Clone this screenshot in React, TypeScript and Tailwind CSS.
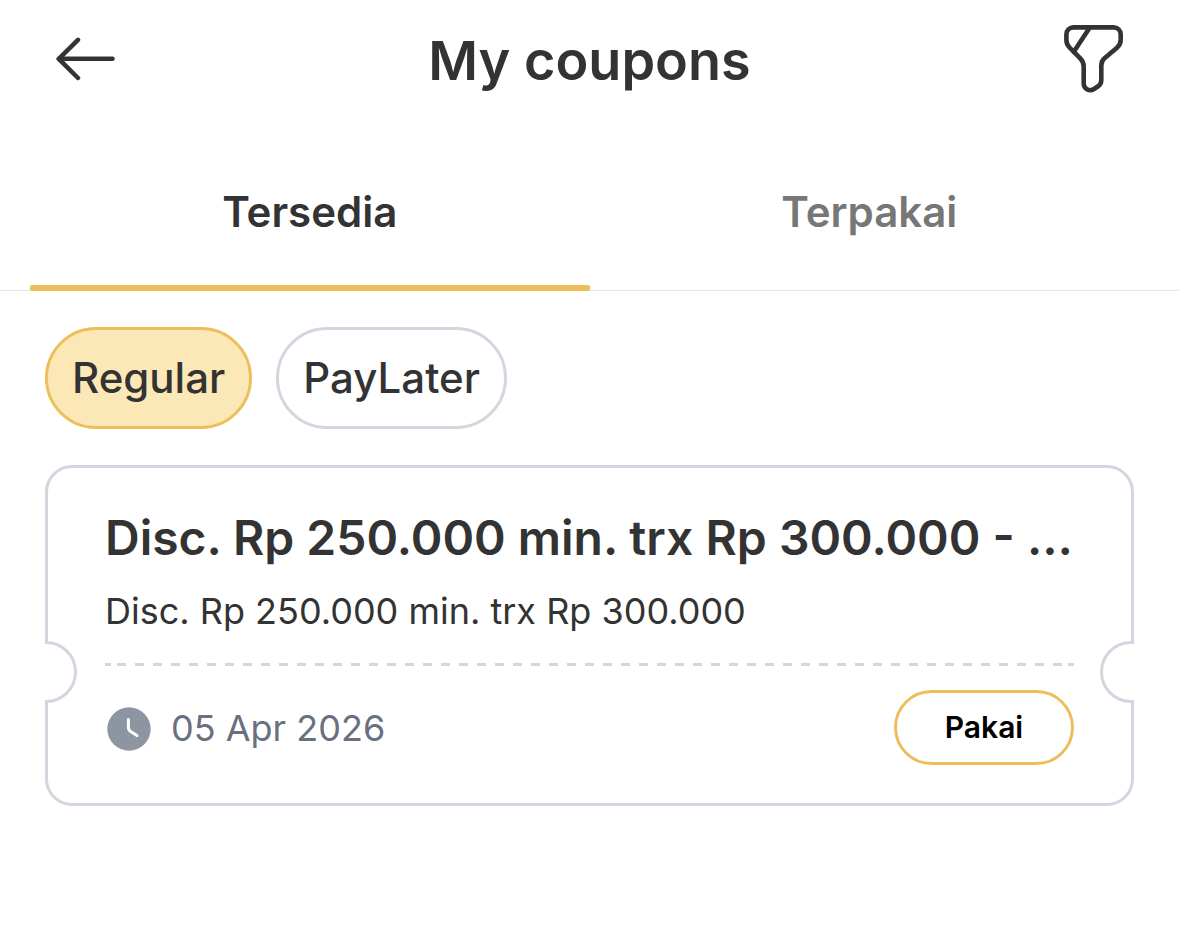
import { useState } from "react";
import clsx from "clsx";

interface Coupon {
  id: number;
  title: string;
  description: string;
  expiresAt: string;
}

const TABS = ["Tersedia", "Terpakai"];
const CATEGORIES = ["Regular", "PayLater"];

const COUPONS: Coupon[] = [
  {
    id: 1,
    title: "Disc. Rp 250.000 min. trx Rp 300.000 - …",
    description: "Disc. Rp 250.000 min. trx Rp 300.000",
    expiresAt: "05 Apr 2026",
  },
];

function BackIcon() {
  return (
    <svg width="60" height="44" viewBox="0 0 60 44" fill="none" stroke="currentColor" strokeWidth="4.5" strokeLinecap="round" strokeLinejoin="round">
      <path d="M22 2.8 2.8 21.8 22 41" />
      <path d="M2.8 21.8H56.5" />
    </svg>
  );
}

function FilterIcon() {
  return (
    <svg width="60" height="68" viewBox="0 0 60 68" fill="none" stroke="currentColor" strokeWidth="4.6" strokeLinecap="round" strokeLinejoin="round">
      <path d="M10.5 2.4H50.5C54.6 2.4 57.7 5.4 57.7 9.5V14.8C57.7 18 56.3 20.8 54 22.8L41.5 33.2C39.3 35.1 38.3 37.5 38.3 40.5V55C38.3 57.8 37 60 34.8 61.5L31 64C26.5 67 20.7 63.8 20.7 58.5V41.5C20.7 38.5 19.5 35.8 17.5 33.7L6.5 22.5C4.5 20.4 3.4 17.8 3.4 15V9.5C3.4 5.4 6.4 2.4 10.5 2.4Z" />
      <path d="M26.3 3.2 10.8 26.8" />
    </svg>
  );
}

function ClockIcon() {
  return (
    <svg width="44" height="46" viewBox="0 -2 44 46" fill="none" className="shrink-0">
      <circle cx="22" cy="22" r="21.7" fill="#8d95a3" />
      <path d="M21.4 12.6V20.6C21.4 22.2 22.2 23.7 23.6 24.5L30 28.6" stroke="#fff" strokeWidth="3" strokeLinecap="round" strokeLinejoin="round" />
    </svg>
  );
}

function CouponCard({ coupon }: { coupon: Coupon }) {
  return (
    <article className="relative overflow-hidden">
      <div className="rounded-[27px] border-3 border-[#d4d6df] px-[57px] pt-10 pb-[38px]">
        <h2 className="truncate text-[48px] leading-[60px] font-semibold">{coupon.title}</h2>
        <p className="mt-[19px] text-[36px] leading-[48px]">{coupon.description}</p>

        <div className="mt-7 flex h-[3px] justify-between bg-[linear-gradient(90deg,#d4d6df_50%,transparent_50%)] bg-[length:18px_3px] bg-[position:-6px_0]">
          <span className="w-1.5 bg-[#d4d6df]"></span>
          <span className="w-1.5 bg-[#d4d6df]"></span>
        </div>

        <div className="mt-6 flex items-center justify-between">
          <div className="flex items-center gap-5 pl-0.5 text-[36px] leading-[48px] text-[#6a7080]">
            <ClockIcon />
            <time dateTime="2026-04-05">{coupon.expiresAt}</time>
          </div>
          <button className="h-[75px] w-[180px] rounded-full border-3 border-[#ecbf5a] text-[30px] font-semibold text-black">
            Pakai
          </button>
        </div>
      </div>

      {/* Ticket notches */}
      <span className="absolute bottom-[103px] -left-[30px] size-[62px] rounded-full border-3 border-[#d4d6df] bg-white"></span>
      <span className="absolute bottom-[103px] -right-[28px] size-[62px] rounded-full border-3 border-[#d4d6df] bg-white"></span>
    </article>
  );
}

export default function App() {
  const [tab, setTab] = useState(TABS[0]);
  const [category, setCategory] = useState(CATEGORIES[0]);

  return (
    <div className="min-h-screen bg-white font-['Inter',sans-serif] text-[#333333]">
      <header className="flex h-[118px] items-center justify-between px-14">
        <button aria-label="Back">
          <BackIcon />
        </button>
        <h1 className="pt-1 text-[54px] leading-[66px] font-semibold">My coupons</h1>
        <button aria-label="Filter">
          <FilterIcon />
        </button>
      </header>

      <nav className="mt-[18px] flex border-b border-[#e6e6e6] px-[30px]">
        {TABS.map((name) => (
          <button
            key={name}
            onClick={() => setTab(name)}
            className={clsx(
              "relative h-[154px] flex-1 pb-[3px] text-[42px] font-semibold",
              tab === name ? "text-[#333333]" : "text-[#777777]"
            )}
          >
            {name}
            {tab === name && (
              <span className="absolute inset-x-0 -bottom-px h-1.5 rounded-[2px] bg-[#ecbf5a]"></span>
            )}
          </button>
        ))}
      </nav>

      <main className="flex flex-col gap-9 px-[45px] pt-9">
        <div className="flex gap-6">
          {CATEGORIES.map((name) => (
            <button
              key={name}
              onClick={() => setCategory(name)}
              className={clsx(
                "h-[102px] rounded-full border-3 px-6 pb-0.5 text-[42px] font-medium",
                category === name ? "border-[#ecbf5a] bg-[#fce8b6]" : "border-[#d4d6df] bg-white"
              )}
            >
              {name}
            </button>
          ))}
        </div>

        {COUPONS.map((coupon) => (
          <CouponCard key={coupon.id} coupon={coupon} />
        ))}
      </main>
    </div>
  );
}
